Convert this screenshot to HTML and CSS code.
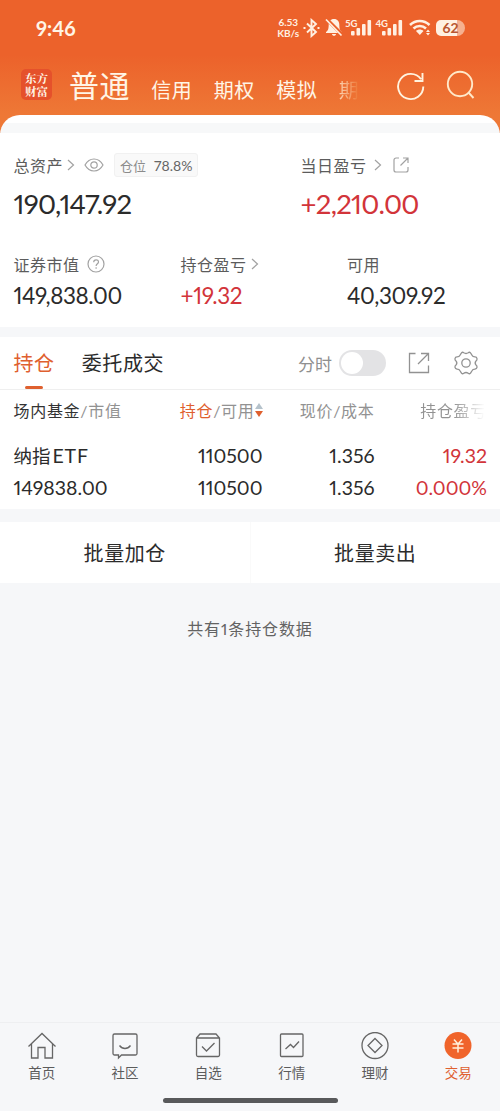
FILE: index.html
```html
<!DOCTYPE html>
<html lang="zh-CN">
<head>
  <meta charset="UTF-8">
  <meta name="viewport" content="width=device-width, initial-scale=1.0">
  <title>交易</title>
  <link rel="stylesheet" href="styles.css">
</head>
<body>
  <header class="top">
    <div class="status">
      <span class="time">9:46</span>
      <div class="status-icons">
        <span class="net-speed">6.53<br>KB/s</span>
        <svg class="bt" width="17" height="20" viewBox="0 0 17 20" fill="none" stroke="#fff0e2" stroke-width="1.9"><path d="M4 5.5l9 8.5-4.5 4V2L13 6l-9 8.500"/><path d="M.5 10h2M14.500 10h2"/></svg>
        <svg class="bell" width="18" height="19" viewBox="0 0 18 19"><path d="M9 1c3.500 0 5.300 2.500 5.300 5.500 0 4.500.7 6 2.700 7.500v1H1v-1c2-1.500 2.700-3 2.700-7.500C3.700 3.500 5.500 1 9 1zM7 16h4c0 2.400-4 2.400-4 0z" fill="#fff0e2"/><path d="M1 .5l17 17" stroke="#ec622b" stroke-width="3.500"/><path d="M1 1.500l15.500 16" stroke="#fff0e2" stroke-width="1.700"/></svg>
        <div class="signal"><span>5G</span><svg width="21" height="17" viewBox="0 0 21 17"><rect x="0" y="12" width="3.600" height="4.500" rx="1"/><rect x="5.500" y="9" width="3.600" height="7.500" rx="1"/><rect x="11" y="5" width="3.600" height="11.500" rx="1"/><rect x="16.500" y="1" width="3.600" height="15.500" rx="1"/></svg></div>
        <div class="signal"><span>4G</span><svg width="21" height="17" viewBox="0 0 21 17"><rect x="0" y="12" width="3.600" height="4.500" rx="1"/><rect x="5.500" y="9" width="3.600" height="7.500" rx="1"/><rect x="11" y="5" width="3.600" height="11.500" rx="1"/><rect x="16.500" y="1" width="3.600" height="15.500" rx="1"/></svg></div>
        <svg class="wifi" width="22" height="17" viewBox="0 0 22 17" fill="none" stroke="#fff0e2" stroke-width="2.500"><path d="M1 6c5.500-5.300 14-5.300 19.500 0M4.500 9.500c3.500-3.400 9-3.400 12.500 0"/><path d="M7 12c2-2 5.500-2 7.500 0l-3.700 4z" fill="#fff0e2" stroke="none"/><path d="M17 13l2-2.500 2 2.500zM17 14l2 2.500 2-2.500z" fill="#fff0e2" stroke="none"/></svg>
        <div class="battery"><span>62</span></div>
      </div>
    </div>
    <nav class="market-nav">
      <div class="logo">东方<br>财富</div>
      <span class="market active">普通</span>
      <span class="market">信用</span>
      <span class="market">期权</span>
      <span class="market">模拟</span>
      <span class="market faded">期</span>
      <svg class="refresh" width="30" height="30" viewBox="0 0 30 30" fill="none" stroke="#fff3df" stroke-width="1.900"><path d="M27.300 15.500A12.600 12.600 0 1 1 25 8.200M26.500 2v8h-8"/></svg>
      <svg class="search" width="30" height="30" viewBox="0 0 30 30" fill="none" stroke="#ffe9ca" stroke-width="1.900"><circle cx="14" cy="14" r="12.200"/><path d="M22.500 22.500l5 5.500"/></svg>
    </nav>
  </header>

  <main>
    <div class="sheet-top"></div>
    <section class="account">
      <div class="assets">
        <div class="cell">
          <div class="label total">总资产<svg class="arrow" width="8" height="12" viewBox="0 0 8 12"><path d="M1 1l5.500 5L1 11"/></svg>
            <svg class="eye" width="20" height="14" viewBox="0 0 20 14"><path d="M1 7c4.500-8 13.500-8 18 0-4.500 8-13.500 8-18 0z"/><circle cx="10" cy="7" r="3.200"/></svg>
            <span class="tag">仓位 <b>78.8%</b></span>
          </div>
          <div class="amount big">190,147.92</div>
        </div>
        <div class="cell">
          <div class="label">当日盈亏<svg class="arrow day" width="8" height="12" viewBox="0 0 8 12"><path d="M1 1l5.500 5L1 11"/></svg>
            <svg class="share-sm" width="16" height="16" viewBox="0 0 16 16"><path d="M6 1H3a2 2 0 0 0-2 2v10a2 2 0 0 0 2 2h10a2 2 0 0 0 2-2v-3M10 1h5v5M15 1L7.500 8.500"/></svg>
          </div>
          <div class="amount big up">+2,210.00</div>
        </div>
      </div>
      <div class="details">
        <div class="cell">
          <div class="label">证券市值<svg class="help" width="18" height="18" viewBox="0 0 18 18"><circle cx="9" cy="9" r="8"/><path d="M6.700 7.300c0-3.300 4.800-3.200 4.800-.4 0 1.800-2.400 1.800-2.400 4M9.100 12.300v1.400"/></svg></div>
          <div class="amount">149,838.00</div>
        </div>
        <div class="cell">
          <div class="label">持仓盈亏<svg class="arrow" width="8" height="12" viewBox="0 0 8 12"><path d="M1 1l5.500 5L1 11"/></svg></div>
          <div class="amount up">+19.32</div>
        </div>
        <div class="cell">
          <div class="label">可用</div>
          <div class="amount">40,309.92</div>
        </div>
      </div>
    </section>

    <section class="holdings">
      <div class="tabs">
        <span class="tab active">持仓</span>
        <span class="tab">委托成交</span>
        <span class="minute">分时</span>
        <span class="switch"></span>
        <svg class="share" width="22" height="22" viewBox="0 0 22 22"><path d="M7.500 1.500H1.500v19h19v-7M13 1.500h7.500V9M20.500 1.500L10 12"/></svg>
        <svg class="gear" width="26" height="24" viewBox="0 0 26 24"><path d="M8.300 2.200Q9.300.5 10.800 1.800Q13 3.200 15.200 1.800Q16.700.5 17.700 2.200L19 4.200Q19.700 5.800 22 5.900Q23.700 6 24 7.600Q24.300 9.200 23 10Q21.300 12 23 14Q24.300 14.800 24 16.400Q23.700 18 22 18.100Q19.700 18.200 19 19.800L17.700 21.800Q16.700 23.500 15.200 22.200Q13 20.800 10.800 22.200Q9.300 23.500 8.300 21.800L7 19.800Q6.300 18.200 4 18.100Q2.300 18 2 16.400Q1.700 14.800 3 14Q4.700 12 3 10Q1.700 9.200 2 7.600Q2.300 6 4 5.900Q6.300 5.800 7 4.200Z"/><circle cx="13" cy="12" r="4.200"/></svg>
      </div>
      <div class="row head">
        <span><em class="dark">场内基金</em>/市值</span>
        <span class="sort"><em class="orange">持仓</em>/可用<svg width="8" height="16" viewBox="0 0 8 16"><path d="M0 7l4-6 4 6z" fill="#b5c2cb"/><path d="M0 9l4 6 4-6z" fill="#df602f"/></svg></span>
        <span>现价/成本</span>
        <span class="cut">持仓盈亏</span>
      </div>
      <div class="row">
        <span class="name">纳指<i>ETF</i></span>
        <span>110500</span>
        <span>1.356</span>
        <span class="up">19.32</span>
      </div>
      <div class="row">
        <span>149838.00</span>
        <span>110500</span>
        <span>1.356</span>
        <span class="up">0.000%</span>
      </div>
    </section>

    <div class="batch">
      <span class="batch-btn">批量加仓</span>
      <span class="batch-btn">批量卖出</span>
    </div>
    <p class="note">共有1条持仓数据</p>
  </main>

  <footer class="bottom">
    <div class="tabbar">
      <div class="item"><svg width="30" height="28" viewBox="0 0 30 28"><path d="M1.500 14.500L15 1.500l13.500 13M4.500 12v14H11V15.500h7V26h7.500V12"/></svg>首页</div>
      <div class="item"><svg width="30" height="28" viewBox="0 0 30 28"><path d="M4.500 2h21a1.500 1.500 0 0 1 1.500 1.500v18a1.500 1.500 0 0 1-1.500 1.500H11.500L8.500 26v-3h-4A1.500 1.500 0 0 1 3 21.500v-18A1.500 1.500 0 0 1 4.500 2zM9.500 13.500c3 4 8 4 11 0"/></svg>社区</div>
      <div class="item"><svg width="30" height="28" viewBox="0 0 30 28"><path d="M3.500 6L7 2h16l3.500 4v17a1.500 1.500 0 0 1-1.500 1.500H5A1.500 1.500 0 0 1 3.500 23zM3.500 6h23M9 14.500l4.500 4.500 8-8"/></svg>自选</div>
      <div class="item"><svg width="30" height="28" viewBox="0 0 30 28"><rect x="3.500" y="2" width="22.500" height="22.500" rx="1"/><path d="M8.500 17l5-4.500 3 3 5.500-6"/></svg>行情</div>
      <div class="item"><svg width="30" height="28" viewBox="0 0 30 28"><circle cx="15" cy="13.500" r="13"/><path d="M15 6.500l7 7-7 7-7-7z"/></svg>理财</div>
      <div class="item active"><svg width="30" height="28" viewBox="0 0 30 28"><circle class="coin" cx="15" cy="13.500" r="13.500"/><path class="yen" d="M11 7.500l4 4.500 4-4.500M9.500 12h11M9.500 16h11M15 12v8.500"/></svg>交易</div>
    </div>
    <div class="home-bar"></div>
  </footer>
</body>
</html>
```
FILE: styles.css
```css
* {
  box-sizing: border-box;
}
body {
  margin: 0;
  width: 500px;
  height: 1111px;
  display: flex;
  flex-direction: column;
  overflow: hidden;
  background: #f6f7f9;
  font-family: Lato, "Noto Sans CJK SC", sans-serif;
  font-variant-numeric: proportional-nums;
  color: #2b2b2b;
}
svg {
  fill: none;
  flex: none;
}
em, i, b {
  font-style: normal;
  font-weight: 400;
}

/* header */
.top {
  height: 140px;
  background: linear-gradient(#ec622b 0, #ec622b 55px, #ee7836 115px, #ee7836 100%);
  color: #fff5e6;
}
.status {
  height: 55px;
  padding: 0 35px 0 36px;
  display: flex;
  justify-content: space-between;
  align-items: center;
}
.time {
  font-size: 20px;
  font-weight: 700;
  letter-spacing: 0;
}
.status-icons {
  display: flex;
  align-items: center;
  color: #fff0e2;
}
.net-speed {
  font-size: 10px;
  line-height: 11px;
  font-weight: 700;
  text-align: center;
  margin-right: 4px;
}
.bell {
  margin: 0 2px 0 5px;
}
.signal {
  display: flex;
  align-items: flex-start;
  height: 17px;
  margin-right: 3px;
}
.signal svg {
  fill: #fff0e2;
}
.signal span {
  font-size: 9.5px;
  line-height: 9px;
  font-weight: 700;
  margin-right: -6px;
}
.wifi {
  margin: 0 5px 0 3px;
}
.battery {
  width: 29px;
  height: 16px;
  border-radius: 5px 8px 8px 5px;
  background: linear-gradient(90deg, #fff0e2 21px, #f6b08f 21px);
  color: #b95530;
  font-size: 14px;
  line-height: 16px;
  font-weight: 700;
  text-align: center;
}
.market-nav {
  height: 60px;
  padding-left: 21px;
  display: flex;
  align-items: flex-start;
}
.logo {
  width: 31px;
  height: 31px;
  margin: 14px 17px 0 0;
  padding-top: 3px;
  border-radius: 5px;
  background: #e5512b;
  font-family: "Noto Serif CJK SC", "Noto Sans CJK SC", serif;
  font-size: 11.5px;
  line-height: 12.5px;
  font-weight: 700;
  text-align: center;
}
.market {
  font-size: 20px;
  line-height: 30px;
  letter-spacing: 0.5px;
  margin: 20px 21.5px 0 0;
}
.market.active {
  font-size: 30px;
  line-height: 40px;
  letter-spacing: 0.4px;
  margin-top: 10px;
}
.market.faded {
  width: 20px;
  background: linear-gradient(90deg, #fbd3b4, #ee7836 95%);
  -webkit-background-clip: text;
  background-clip: text;
  color: transparent;
}
.refresh {
  margin: 16px 0 0 16px;
}
.search {
  margin: 15px 0 0 20px;
}

/* account */
main {
  flex: 1;
}
.sheet-top {
  height: 43px;
  margin-top: -25px;
  border-radius: 20px 20px 0 0;
  background: linear-gradient(#fff 8px, #f7f8f9 8px, #f7f8f9 18px, #fff 18px);
}
.account {
  height: 194px;
  margin-top: -25px;
  padding: 20px 13px 0 13.5px;
  background: #fff;
}
.assets, .details {
  display: grid;
  grid-template-columns: 287px 1fr;
}
.details {
  grid-template-columns: 167px 166.500px 1fr;
  margin-top: 30px;
}
.label {
  height: 24px;
  display: flex;
  align-items: center;
  font-size: 16px;
  letter-spacing: 0.5px;
  color: #5c5c5c;
}
.arrow, .eye, .help, .share-sm {
  stroke: #a2a2a2;
  stroke-width: 1.2;
}
.arrow {
  margin-left: 4px;
}
.arrow.day {
  margin-left: 7px;
}
.eye {
  margin-left: 9px;
}
.help {
  margin-left: 7px;
}
.share-sm {
  margin-left: 11px;
}
.tag {
  height: 24px;
  margin-left: 10px;
  padding: 0 5px;
  display: flex;
  align-items: center;
  gap: 8px;
  border: 1px solid #f1f1f1;
  border-radius: 3px;
  background: #f9f9f9;
  font-size: 13px;
  letter-spacing: 0;
  color: #8b8b8b;
}
.tag b {
  font-size: 14px;
  color: #666;
}
.amount {
  height: 34px;
  margin-top: 2px;
  font-size: 22.5px;
  line-height: 36px;
  letter-spacing: -0.4px;
}
.amount.big {
  height: 36px;
  margin-top: 9px;
  font-size: 27.5px;
  line-height: 36px;
  letter-spacing: -0.7px;
}
.up {
  color: #d2343a;
}

/* holdings */
.holdings {
  height: 172px;
  margin-top: 10px;
  background: #fff;
}
.tabs {
  height: 53px;
  padding: 0 21px 0 13.5px;
  display: flex;
  align-items: center;
  border-bottom: 1px solid #efefef;
}
.tab {
  height: 52px;
  font-size: 20px;
  line-height: 53px;
  letter-spacing: 0.6px;
  margin-right: 27px;
}
.tab.active {
  color: #df602f;
  display: flex;
  flex-direction: column;
  align-items: center;
}
.tab.active::after {
  content: "";
  width: 18px;
  height: 3px;
  margin-top: -4px;
  flex: none;
  border-radius: 2px;
  background: #df602f;
}
.minute {
  margin-left: auto;
  font-size: 17px;
  color: #8f8f8f;
}
.switch {
  width: 47px;
  height: 26px;
  margin: 0 22px 0 7px;
  padding: 2px;
  border-radius: 13px;
  background: #e3e3e5;
}
.switch::before {
  content: "";
  display: block;
  width: 22px;
  height: 22px;
  border-radius: 50%;
  background: #fff;
}
.share, .gear {
  stroke: #929292;
  stroke-width: 1.3;
}
.gear {
  margin-left: 23px;
}
.row {
  height: 32px;
  padding: 0 13px 0 13.5px;
  display: grid;
  grid-template-columns: 130px 119px 112px 1fr;
  align-items: center;
  font-size: 19.5px;
}
.row > span {
  text-align: right;
  white-space: nowrap;
}
.row > span:first-child {
  text-align: left;
}
.row.head {
  height: 40px;
  margin-bottom: 9px;
  font-size: 16px;
  letter-spacing: 0.7px;
  color: #929292;
}
.dark {
  color: #333;
}
.orange {
  color: #df602f;
}
.row .sort {
  display: flex;
  align-items: center;
  justify-content: flex-end;
}
.row .cut {
  background: linear-gradient(90deg, #929292 70%, #fff 98%);
  -webkit-background-clip: text;
  background-clip: text;
  color: transparent;
}
.name {
  font-size: 18.5px;
}
.name i {
  margin-left: 2px;
  font-size: 19.5px;
  letter-spacing: 0.8px;
}
.batch {
  height: 61px;
  margin-top: 13px;
  display: flex;
  background: #fff;
}
.batch-btn {
  flex: 1;
  font-size: 20px;
  line-height: 63px;
  letter-spacing: 0.6px;
  text-align: center;
}
.batch-btn + .batch-btn {
  border-left: 1px solid #fafafa;
}
.note {
  margin: 33px 0 0;
  font-size: 16px;
  line-height: 26px;
  letter-spacing: 0.9px;
  text-align: center;
  color: #636363;
}

/* bottom bar */
.bottom {
  height: 89px;
  border-top: 1px solid #eeeff1;
}
.tabbar {
  height: 75px;
  padding-top: 9px;
  display: flex;
}
.item {
  flex: 1;
  display: flex;
  flex-direction: column;
  align-items: center;
  font-size: 13.5px;
  line-height: 26px;
  color: #5c5c5c;
}
.item svg {
  stroke: #666;
  stroke-width: 1.3;
}
.item.active {
  color: #df602f;
}
.item .coin {
  fill: #f0642b;
  stroke: none;
}
.item .yen {
  stroke: #fff0dc;
  stroke-width: 1.5;
}
.home-bar {
  width: 175px;
  height: 5px;
  margin: 0 auto;
  border-radius: 3px;
  background: #58595b;
}
```
